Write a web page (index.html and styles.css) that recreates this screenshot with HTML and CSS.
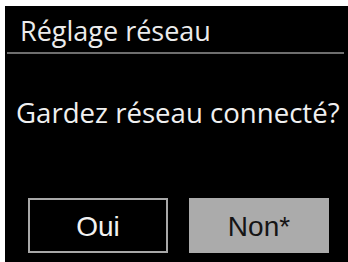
FILE: index.html
```html
<!DOCTYPE html>
<html lang="fr">
<head>
<meta charset="utf-8">
<link rel="stylesheet" href="styles.css">
</head>
<body>
<div class="screen">
  <div class="header"><span class="title">Réglage réseau</span></div>
  <div class="question">Gardez réseau connecté?</div>
  <div class="buttons">
    <div class="btn btn-outline">Oui</div>
    <div class="btn btn-selected">Non*</div>
  </div>
</div>
</body>
</html>
```

FILE: styles.css
```css
html, body {
  margin: 0;
  padding: 0;
  background: #ffffff;
}
.screen {
  margin: 6px 0 0 5px;
  width: 343px;
  height: 256px;
  background: #000;
  display: flex;
  flex-direction: column;
  font-family: "Open Sans", "DejaVu Sans", sans-serif;
}
.header {
  margin: 0 4px 0 2px;
  height: 48px;
  border-bottom: 2px solid #6e6e6e;
  box-sizing: border-box;
  display: flex;
  align-items: flex-end;
  padding: 0 0 6px 13px;
}
.title {
  color: #ececec;
  font-size: 27px;
  line-height: 30px;
}
.question {
  color: #f0f0f0;
  font-size: 27.6px;
  line-height: 32px;
  margin-top: 42px;
  padding-left: 11px;
  white-space: nowrap;
}
.buttons {
  display: flex;
  gap: 21px;
  margin-top: 70px;
  padding-left: 23px;
}
.btn {
  width: 140px;
  height: 55px;
  box-sizing: border-box;
  display: flex;
  align-items: center;
  justify-content: center;
  padding-top: 3px;
  font-family: "Liberation Sans", Arial, sans-serif;
  font-size: 28px;
}
.btn-outline {
  border: 2px solid #a8a8a8;
  color: #f2f2f2;
}
.btn-selected {
  background: #ababab;
  color: #151515;
}
```
